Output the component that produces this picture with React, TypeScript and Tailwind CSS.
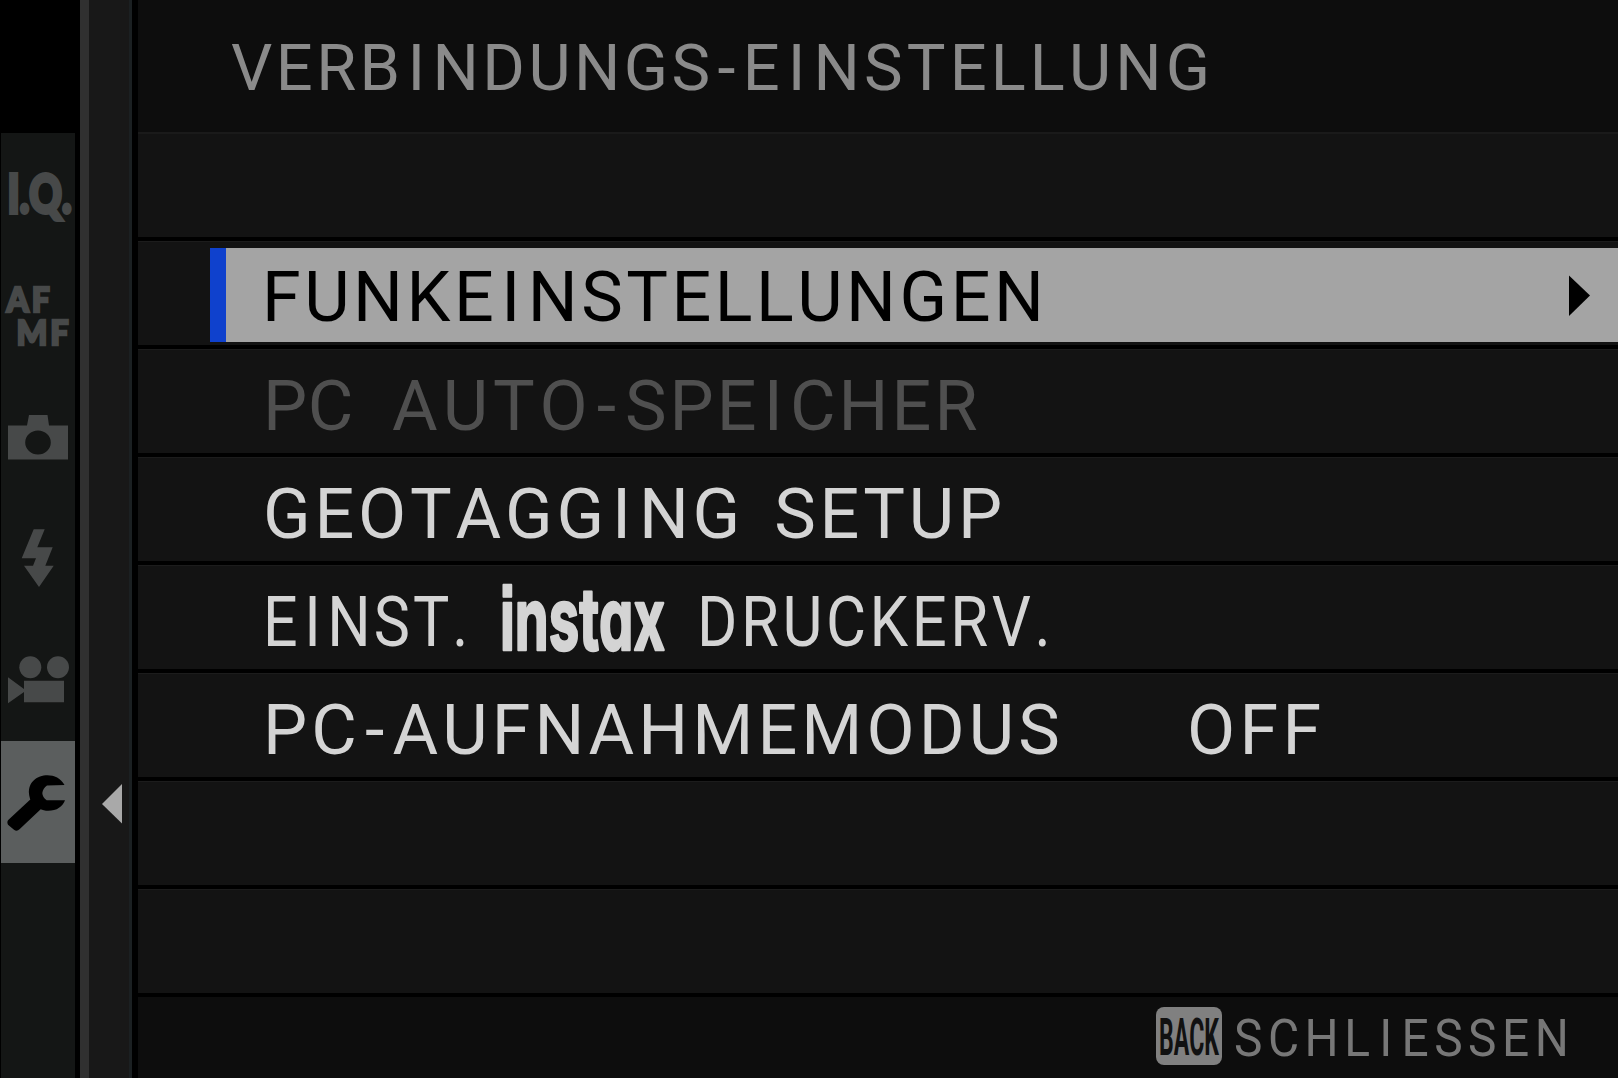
import React from "react";

type Tone = "normal" | "disabled";

/** Menu lettering: narrow glyphs (I, hyphen) get extra side room. */
function Lettering({ text }: { text: string }) {
  return (
    <>
      {text.split(/([I-])/).map((part, i) =>
        part === "I" || part === "-" ? (
          <span key={i} className="mx-[4px]">{part}</span>
        ) : (
          <React.Fragment key={i}>{part}</React.Fragment>
        )
      )}
    </>
  );
}

const iconFill = "#474949";

function IqIcon() {
  return (
    <svg className="overflow-visible" width="74" height="60" viewBox="0 0 74 60" fill={iconFill} stroke={iconFill} fontFamily="Lato" fontWeight="900">
      <text x="6.5" y="49.5" fontSize="53" strokeWidth="4" textLength="64" lengthAdjust="spacingAndGlyphs">I.Q.</text>
    </svg>
  );
}

function AfMfIcon() {
  return (
    <svg className="overflow-visible" width="74" height="64" viewBox="0 0 74 64" fill={iconFill} stroke={iconFill} strokeWidth="2.4" fontFamily="Lato" fontWeight="900" fontSize="34">
      <text x="5.5" y="29" letterSpacing="3" textLength="46" lengthAdjust="spacingAndGlyphs">AF</text>
      <text x="15.5" y="61.5" letterSpacing="3" textLength="55" lengthAdjust="spacingAndGlyphs">MF</text>
    </svg>
  );
}

function CameraIcon() {
  return (
    <svg width="74" height="46" viewBox="1 413.5 74 46" fill={iconFill}>
      <path fillRule="evenodd" d="M8 425H27L29 414.5H47.5L49 425H68V459H8ZM38 430a12.8 12 0 1 0 0 24a12.8 12 0 1 0 0-24Z" />
    </svg>
  );
}

function FlashIcon() {
  return (
    <svg width="74" height="60" viewBox="1 528 74 60" fill={iconFill}>
      <path d="M33.7 529.3H44.7L37.3 547.3H52.7L45.3 565.7H53.7L39 587L24 565.7H33L36 558.3H21.7Z" />
    </svg>
  );
}

function MovieIcon() {
  return (
    <svg width="74" height="50" viewBox="1 654.5 74 50" fill={iconFill}>
      <circle cx="30.3" cy="666.7" r="11" />
      <circle cx="58" cy="666.7" r="11" />
      <path d="M24 680.3H64V701.7H24V691.5L8 702.7V676.7L24 688.5Z" />
    </svg>
  );
}

function WrenchIcon() {
  return (
    <svg width="74" height="60" viewBox="1 771.7 74 60" fill="#000">
      <path d="M64.5 784.8C61 778 54 775 47.5 775C37 775 28 782 29 793.5C29.2 796 30 798 30.3 799.3L8.5 819.5Q6.5 821.5 8 824.5L14 829.5Q17 831.5 19.5 829L40.7 809C44 811 54 811.5 59 807.5C62 805.5 63.8 803 65 800H46.7Q42.5 797 42.3 792.7Q43 788 47 785.3Z" />
    </svg>
  );
}

const tabs = [
  { id: "iq", icon: <IqIcon /> },
  { id: "afmf", icon: <AfMfIcon /> },
  { id: "shooting", icon: <CameraIcon /> },
  { id: "flash", icon: <FlashIcon /> },
  { id: "movie", icon: <MovieIcon /> },
  { id: "setup", icon: <WrenchIcon />, active: true },
];

function Sidebar() {
  return (
    <nav className="flex w-[76px] shrink-0 flex-col bg-black pl-px pt-[132.5px]">
      <div className="w-[74px] flex-1 bg-[#141615]">
        {tabs.map((t) => (
          <div key={t.id} className={`flex h-[121.7px] items-center justify-center ${t.active ? "bg-[#5b5e5e]" : ""}`}>
            {t.icon}
          </div>
        ))}
      </div>
    </nav>
  );
}

function Divider() {
  return (
    <div className="flex w-[62px] shrink-0 bg-black pl-[3.5px]">
      <div className="w-[9.5px] bg-[#303030]" />
      <div className="flex w-[40px] flex-col bg-[#181818] pl-[13px] pt-[783px]">
        <svg width="20" height="41" viewBox="0 0 20 41">
          <path d="M0 21L20 1V40.5Z" fill="#a9a9a9" />
        </svg>
      </div>
      <div className="w-[2.5px] bg-[#1b2022]" />
    </div>
  );
}

const toneClass: Record<Tone, string> = {
  normal: "text-[#d4d4d4]",
  disabled: "text-[#4f4f4f]",
};

function Row({ children, tone = "normal" }: { children?: React.ReactNode; tone?: Tone }) {
  return (
    <div className="h-[108px] border-t-4 border-black">
      <div
        className={`flex h-full items-center border-t border-[#1c1c1c] bg-[#131313] pl-[125px] pt-[8px] text-[70px] leading-none tracking-[3.5px] whitespace-nowrap ${toneClass[tone]}`}
      >
        {children}
      </div>
    </div>
  );
}

function SelectedRow({ label }: { label: string }) {
  return (
    <div className="h-[108px] border-t-4 border-black">
      <div className="flex h-full border-t border-[#1c1c1c] bg-[#131313] pl-[72px] pt-[6px] pb-[3px]">
        <div className="w-[16px] bg-[#0f41cd]" />
        <div className="flex flex-1 items-center justify-between bg-[#a4a4a4] pl-[36px] pr-[28px] pt-[4px] text-[70px] leading-none tracking-[3.5px] whitespace-nowrap text-black">
          <span><Lettering text={label} /></span>
          <svg className="-mt-[4px]" width="21" height="41" viewBox="0 0 21 41">
            <path d="M0 0.5L21 20.5L0 41Z" />
          </svg>
        </div>
      </div>
    </div>
  );
}

function InstaxLogo() {
  return (
    <svg className="overflow-visible" width="166" height="76" viewBox="0 0 166 76" fill="#d4d4d4" stroke="#d4d4d4">
      <text
        x="-2" y="66" fontFamily="Inter" fontWeight="700" fontSize="87" strokeWidth="2.5" strokeLinejoin="round"
        textLength="165" lengthAdjust="spacingAndGlyphs" letterSpacing="0"
        className="[font-feature-settings:'cv11','ss07']"
      >
        instax
      </text>
    </svg>
  );
}

export default function App() {
  return (
    <div className="flex h-[1078px] w-[1618px] overflow-hidden bg-black font-['Roboto',sans-serif] [font-kerning:none]">
      <Sidebar />
      <Divider />
      <main className="flex min-w-0 flex-1 flex-col">
        <header className="flex h-[132px] items-center bg-[#0d0d0d] pl-[93px] pt-[4px] text-[65px] leading-none whitespace-nowrap text-[#8a8a8a]">
          <h1>
            <span className="tracking-[3.4px]"><Lettering text="VERBINDUNGS-" /></span>
            <span className="tracking-[4.1px]"><Lettering text="EINSTELLUNG" /></span>
          </h1>
        </header>
        <div className="h-[105px] border-t-2 border-[#1a1a1a] bg-[#131313]" />
        <SelectedRow label="FUNKEINSTELLUNGEN" />
        <Row tone="disabled">
          <div>
            <span className="tracking-[0.5px] [word-spacing:20.5px]">PC </span>
            <span className="tracking-[4.9px]"><Lettering text="AUTO-" /></span>
            <span className="tracking-[3.1px]"><Lettering text="SPEICHER" /></span>
          </div>
        </Row>
        <Row>
          <div className="tracking-[3.8px] [word-spacing:9px]"><Lettering text="GEOTAGGING SETUP" /></div>
        </Row>
        <Row>
          <div className="w-[239px]"><span className="inline-block origin-left scale-x-[0.87]"><Lettering text="EINST." /></span></div>
          <div className="w-[195px]"><InstaxLogo /></div>
          <div><span className="inline-block origin-left scale-x-[0.88] tracking-[4px]">DRUCKERV.</span></div>
        </Row>
        <Row>
          <div className="w-[924px] tracking-[4.1px]"><Lettering text="PC-AUFNAHMEMODUS" /></div>
          <div className="tracking-[4.3px]">OFF</div>
        </Row>
        <Row />
        <Row />
        <footer className="flex flex-1 items-start border-t-4 border-black bg-[#0d0d0d] pl-[1018px] pt-[10px]">
          <div className="h-[58px] w-[66px] rounded-[8px] bg-[#808080]">
            <svg className="overflow-visible" width="66" height="58" viewBox="0 0 66 58">
              <text x="3" y="47.5" fontFamily="Roboto" fontWeight="700" fontSize="52" fill="#111" textLength="60" lengthAdjust="spacingAndGlyphs">BACK</text>
            </svg>
          </div>
          <div className="pl-[12px] pt-[5.5px] text-[52px] leading-none tracking-[6px] whitespace-nowrap text-[#777]">
            <span className="inline-block origin-left scale-x-[0.92]"><Lettering text="SCHLIESSEN" /></span>
          </div>
        </footer>
      </main>
    </div>
  );
}
